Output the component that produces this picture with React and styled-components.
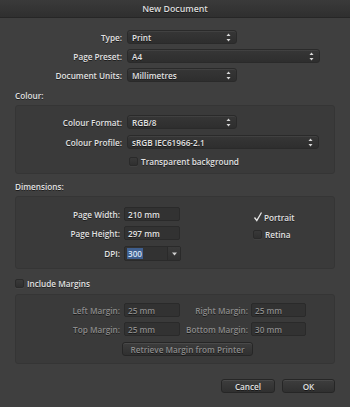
import React from 'react';
import styled, { createGlobalStyle } from 'styled-components';

const GlobalStyle = createGlobalStyle`
  html, body {
    margin: 0;
    padding: 0;
    background: #3f3f3f;
  }
  * {
    box-sizing: border-box;
  }
`;

const Window = styled.div`
  width: 350px;
  height: 407px;
  background: #3f3f3f;
  font-family: 'Open Sans', 'Liberation Sans', sans-serif;
  font-size: 8.2px;
  font-weight: 600;
  color: #e2e2e2;
  text-shadow: 0 1px 0 rgba(0, 0, 0, 0.55);
  display: flex;
  flex-direction: column;
  overflow: hidden;
`;

const TitleBar = styled.div`
  height: 18px;
  flex: none;
  display: flex;
  align-items: center;
  justify-content: center;
  background: linear-gradient(#3a3a3a, #2f2f2f);
  border-bottom: 1px solid #262626;
  font-size: 8.8px;
  color: #dcdcdc;
`;

const Body = styled.div`
  flex: 1;
  display: flex;
  flex-direction: column;
  padding: 12px 15px 0 15px;
`;

const Rows = styled.div`
  display: flex;
  flex-direction: column;
  gap: ${p => p.gap || 5}px;
`;

const Row = styled.div`
  display: flex;
  align-items: center;
  height: ${p => p.h || 14}px;
`;

const Label = styled.div`
  width: ${p => p.w}px;
  flex: none;
  text-align: right;
  padding-right: ${p => p.pr || 5}px;
  white-space: nowrap;
  color: ${p => (p.disabled ? '#8c8c8c' : 'inherit')};
`;

const SectionTitle = styled.div`
  height: 12px;
  display: flex;
  align-items: center;
  margin: ${p => p.m || '0'};
`;

const Box = styled.div`
  background: #3a3a3a;
  border: 1px solid #353535;
  border-radius: 3px;
  padding: ${p => p.pad};
  margin-top: ${p => p.mt || 0}px;
`;

const SelectBox = styled.div`
  width: ${p => p.w}px;
  height: 14px;
  flex: none;
  display: flex;
  align-items: center;
  justify-content: space-between;
  padding: 0 5px 0 4px;
  border-radius: 3px;
  border: 1px solid #2a2a2a;
  background: linear-gradient(#363636, #2e2e2e);
  box-shadow: inset 0 1px 0 rgba(255, 255, 255, 0.06);
`;

const Input = styled.div`
  width: ${p => p.w || 56}px;
  height: 14px;
  flex: none;
  display: flex;
  align-items: center;
  padding-left: 3px;
  border: 1px solid #2a2a2a;
  border-radius: 2px;
  background: #323232;
  color: ${p => (p.disabled ? '#8c8c8c' : 'inherit')};
`;

const Combo = styled.div`
  width: 57px;
  height: 15px;
  flex: none;
  display: flex;
  border: 1px solid #2a2a2a;
  border-radius: 2px;
  background: #323232;
`;

const ComboText = styled.div`
  flex: 1;
  display: flex;
  align-items: center;
  padding-left: 2px;
`;

const Selected = styled.span`
  background: #3f5f8f;
  color: #d8e2f2;
  padding: 0 1px;
  text-shadow: none;
`;

const ComboButton = styled.div`
  width: 13px;
  flex: none;
  display: flex;
  align-items: center;
  justify-content: center;
  border-left: 1px solid #2a2a2a;
  background: linear-gradient(#3a3a3a, #303030);
`;

const Check = styled.div`
  width: 9px;
  height: 9px;
  flex: none;
  border-radius: 2px;
  background: linear-gradient(#393939, #2f2f2f);
  border: 1px solid #2a2a2a;
  box-shadow: 0 1px 0 rgba(255, 255, 255, 0.04);
  margin-right: 3px;
`;

const CheckRow = styled.div`
  display: flex;
  align-items: center;
  height: ${p => p.h || 12}px;
  padding-left: ${p => p.pl || 0}px;
`;

const Columns = styled.div`
  display: flex;
`;

const Side = styled.div`
  display: flex;
  flex-direction: column;
  gap: 5px;
  padding: 4px 0 0 0;
  margin-left: ${p => p.ml}px;
`;

const Button = styled.div`
  width: ${p => p.w}px;
  height: 14px;
  display: flex;
  align-items: center;
  justify-content: center;
  border-radius: 3px;
  border: 1px solid #262626;
  background: linear-gradient(#3d3d3d, #303030);
  box-shadow: inset 0 1px 0 rgba(255, 255, 255, 0.07);
  color: ${p => (p.disabled ? '#8c8c8c' : 'inherit')};
  margin: ${p => p.m || 0};
`;

const Footer = styled.div`
  display: flex;
  justify-content: flex-end;
  gap: 7px;
  margin-top: 15px;
`;

const Arrows = () => (
  <svg width="5" height="9" viewBox="0 0 5 9">
    <path d="M2.5 0.5 L4.5 3 L0.5 3 Z" fill="#d8d8d8" />
    <path d="M2.5 8.5 L4.5 6 L0.5 6 Z" fill="#d8d8d8" />
  </svg>
);

const Down = () => (
  <svg width="5" height="4" viewBox="0 0 5 4">
    <path d="M0 0.5 L5 0.5 L2.5 3.5 Z" fill="#d0d0d0" />
  </svg>
);

const Tick = () => (
  <svg width="10" height="10" viewBox="0 0 10 10" style={{ marginRight: 1 }}>
    <path d="M1.5 5.5 L3.8 8.5 L8.5 0.5" stroke="#e6e6e6" strokeWidth="1.3" fill="none" />
  </svg>
);

const Select = ({ w, children }) => (
  <SelectBox w={w}>
    <span>{children}</span>
    <Arrows />
  </SelectBox>
);

export default function App() {
  return (
    <>
      <GlobalStyle />
      <Window>
        <TitleBar>New Document</TitleBar>
        <Body>
          <Rows gap={5}>
            <Row>
              <Label w={112}>Type:</Label>
              <Select w={110}>Print</Select>
            </Row>
            <Row>
              <Label w={112}>Page Preset:</Label>
              <Select w={193}>A4</Select>
            </Row>
            <Row>
              <Label w={112}>Document Units:</Label>
              <Select w={110}>Millimetres</Select>
            </Row>
          </Rows>

          <SectionTitle m="7px 0 0 0">Colour:</SectionTitle>
          <Box mt={4} pad="9px 0 6px 0">
            <Rows gap={6}>
              <Row>
                <Label w={111}>Colour Format:</Label>
                <Select w={110}>RGB/8</Select>
              </Row>
              <Row>
                <Label w={111}>Colour Profile:</Label>
                <Select w={192}>sRGB IEC61966-2.1</Select>
              </Row>
              <CheckRow pl={113}>
                <Check />
                Transparent background
              </CheckRow>
            </Rows>
          </Box>

          <SectionTitle m="6px 0 0 0">Dimensions:</SectionTitle>
          <Box mt={4} pad="10px 0 7px 0">
            <Columns>
              <Rows gap={5}>
                <Row>
                  <Label w={108} pr={4}>Page Width:</Label>
                  <Input>210 mm</Input>
                </Row>
                <Row>
                  <Label w={108} pr={4}>Page Height:</Label>
                  <Input>297 mm</Input>
                </Row>
                <Row h={15} style={{ marginTop: 1 }}>
                  <Label w={108} pr={4}>DPI:</Label>
                  <Combo>
                    <ComboText>
                      <Selected>300</Selected>
                    </ComboText>
                    <ComboButton>
                      <Down />
                    </ComboButton>
                  </Combo>
                </Row>
              </Rows>
              <Side ml={72}>
                <CheckRow>
                  <Tick />
                  Portrait
                </CheckRow>
                <CheckRow>
                  <Check />
                  Retina
                </CheckRow>
              </Side>
            </Columns>
          </Box>

          <CheckRow h={12} style={{ marginTop: 8 }}>
            <Check />
            Include Margins
          </CheckRow>
          <Box mt={5} pad="8px 0 6px 0">
            <Rows gap={5}>
              <Row>
                <Label w={108} pr={4} disabled>Left Margin:</Label>
                <Input disabled>25 mm</Input>
                <Label w={71} pr={3} disabled>Right Margin:</Label>
                <Input w={55} disabled>25 mm</Input>
              </Row>
              <Row>
                <Label w={108} pr={4} disabled>Top Margin:</Label>
                <Input disabled>25 mm</Input>
                <Label w={71} pr={3} disabled>Bottom Margin:</Label>
                <Input w={55} disabled>30 mm</Input>
              </Row>
              <Row h={16}>
                <Button w={131} disabled m="0 0 0 106px">
                  Retrieve Margin from Printer
                </Button>
              </Row>
            </Rows>
          </Box>

          <Footer>
            <Button w={54}>Cancel</Button>
            <Button w={53}>OK</Button>
          </Footer>
        </Body>
      </Window>
    </>
  );
}
